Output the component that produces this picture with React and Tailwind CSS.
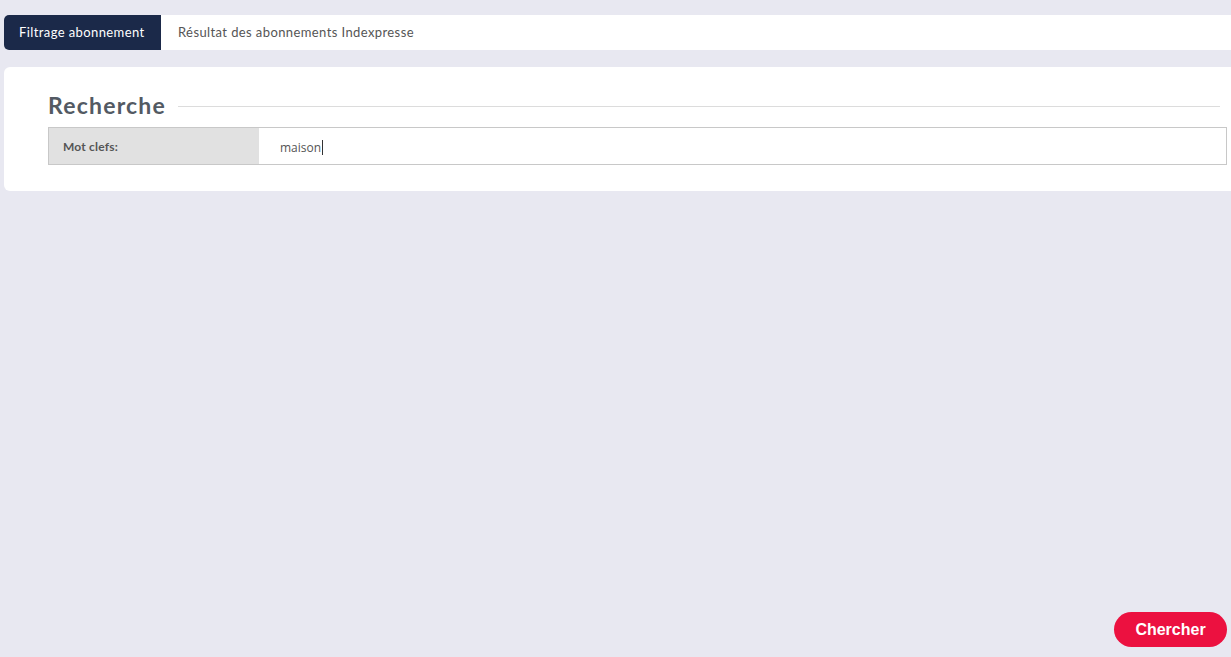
export default function App() {
  return (
    <div className="h-screen w-full bg-[#e8e8f1] flex flex-col overflow-hidden font-['Lato',sans-serif]">
      <div className="mt-[15px] ml-[4px] flex h-[35px] bg-white rounded-l-[5px]">
        <div className="flex items-center bg-[#1b2949] text-white text-[13px] tracking-[0.4px] px-[15px] w-[157px] rounded-l-[5px]">
          Filtrage abonnement
        </div>
        <div className="flex items-center text-[#555] text-[13px] tracking-[0.4px] pl-[17px]">
          Résultat des abonnements Indexpresse
        </div>
      </div>

      <div className="mt-[17px] ml-[4px] bg-white rounded-l-[6px] pl-[44px] pr-[4px] pt-[24px] pb-[26px]">
        <div className="flex items-center gap-[12px] pr-[7px]">
          <h2 className="text-[23px] font-bold text-[#535a63] leading-[28px] tracking-[1.2px]">Recherche</h2>
          <div className="flex-1 h-px bg-[#dcdcdc] mt-[2px]" />
        </div>
        <div className="mt-[8px] flex h-[38px] border border-[#c8c8c8]">
          <div className="w-[210px] bg-[#e1e1e1] flex items-center pl-[14px] pt-[1px] text-[12px] font-bold text-[#555] tracking-[0.2px]">
            Mot clefs:
          </div>
          <div className="flex-1 flex items-center pl-[21px] pt-[3px] text-[12px] text-[#555] font-['Open_Sans',sans-serif]">
            maison<span className="inline-block w-px h-[15px] bg-[#333] ml-px" />
          </div>
        </div>
      </div>

      <button className="mt-auto mb-[10px] mr-[4px] self-end w-[113px] h-[35px] rounded-full bg-[#ec1140] text-white text-[16px] font-bold font-['Liberation_Sans',Arial,sans-serif]">
        Chercher
      </button>
    </div>
  );
}
